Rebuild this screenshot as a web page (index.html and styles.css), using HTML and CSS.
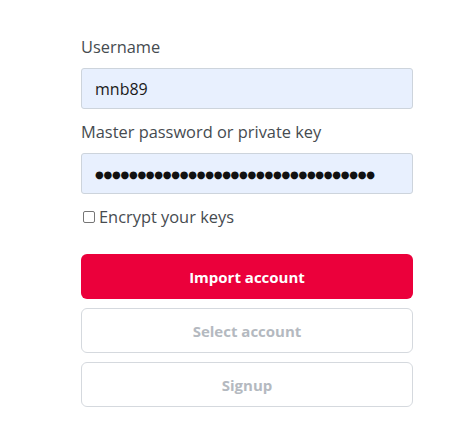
FILE: index.html
```html
<!DOCTYPE html>
<html>
<head>
<meta charset="utf-8">
<link rel="stylesheet" href="styles.css">
</head>
<body>
<div class="form">
  <div class="group">
    <label class="label">Username</label>
    <div class="field">mnb89</div>
  </div>
  <div class="group">
    <label class="label">Master password or private key</label>
    <div class="field dots">●●●●●●●●●●●●●●●●●●●●●●●●●●●●●●●●●</div>
  </div>
  <label class="check"><span class="box"></span>Encrypt your keys</label>
  <div class="buttons">
    <button class="btn primary">Import account</button>
    <button class="btn secondary">Select account</button>
    <button class="btn secondary">Signup</button>
  </div>
</div>
</body>
</html>
```
FILE: styles.css
```css
* { box-sizing: border-box; }
body {
  margin: 0;
  background: #fff;
  font-family: "Open Sans", sans-serif;
  color: #464b50;
}
.form {
  width: 332px;
  margin-left: 81px;
  padding-top: 35px;
  display: flex;
  flex-direction: column;
}
.group {
  display: flex;
  flex-direction: column;
  margin-bottom: 11px;
}
.label {
  font-size: 16.4px;
  line-height: 24px;
  margin-bottom: 9px;
}
.field {
  height: 41px;
  background: #e8f0fe;
  border: 1px solid #cdd4dc;
  border-radius: 3px;
  padding: 0 13px;
  display: flex;
  align-items: center;
  font-size: 16px;
  color: #1a1a1a;
}
.dots {
  font-family: "DejaVu Sans", sans-serif;
  font-size: 10px;
  letter-spacing: -0.25px;
  color: #111;
  padding-top: 2px;
}
.check {
  display: flex;
  align-items: center;
  font-size: 16.4px;
  line-height: 24px;
}
.box {
  width: 12px;
  height: 12px;
  border: 1px solid #767676;
  border-radius: 2px;
  margin: 0 4px 0 2px;
}
.buttons {
  display: flex;
  flex-direction: column;
  gap: 9px;
  margin-top: 25px;
}
.btn {
  height: 45px;
  border-radius: 6px;
  font-family: "Open Sans", sans-serif;
  font-weight: 700;
  font-size: 15px;
}
.primary {
  background: #eb003b;
  color: #fff;
  border: none;
}
.secondary {
  background: #fff;
  border: 1px solid #d5d9de;
  color: #b4b9c0;
}
```
